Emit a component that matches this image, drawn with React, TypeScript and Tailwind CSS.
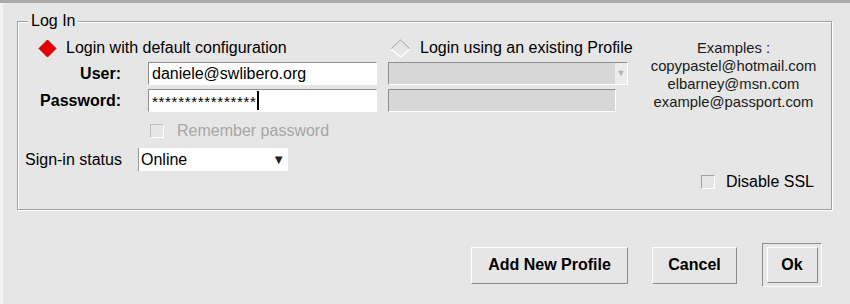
import { FC } from 'react'

const sunken = 'border border-t-[#8e8e8e] border-l-[#8e8e8e] border-b-white border-r-white'
const raised = 'border border-t-white border-l-white border-b-[#8a8a8a] border-r-[#8a8a8a]'

const Diamond: FC<{ on?: boolean }> = ({ on }) =>
  on ? (
    <svg width="19" height="19" viewBox="0 0 19 19" className="shrink-0">
      <polygon points="9.5,1 18,9.5 9.5,18 1,9.5" fill="#e30000" stroke="#c40000" strokeWidth="1" />
    </svg>
  ) : (
    <svg width="21" height="19" viewBox="0 0 21 19" className="shrink-0">
      <polyline points="1,10 10.5,1 20,10" fill="none" stroke="#a0a0a0" strokeWidth="1" />
      <polyline points="1,10 10.5,18 20,10" fill="none" stroke="#ffffff" strokeWidth="1.2" />
    </svg>
  )

const Check: FC<{ disabled?: boolean }> = ({ disabled }) => (
  <span
    className={`inline-block w-[14px] h-[14px] shrink-0 border ${
      disabled
        ? 'border-t-[#bdbdbd] border-l-[#bdbdbd] border-b-white border-r-white'
        : 'border-t-[#a2a2a2] border-l-[#a2a2a2] border-b-white border-r-white'
    }`}
  />
)

const App: FC = () => {
  return (
    <div className="w-[850px] h-[304px] bg-[#e6e6e6] text-[16px] text-black font-['Liberation_Sans',Arial,sans-serif] border-t-[3px] border-[#ababab] overflow-hidden">
      <div className="h-full border-l-[3px] border-l-[#f4f4f4] pt-[18px]">
        {/* Log In group */}
        <div className="relative ml-[14px] w-[815px] h-[189px] border border-[#a0a0a0] shadow-[inset_1px_1px_0_#fff,1px_1px_0_#fff]">
          <span className="absolute -top-[10px] left-[10px] px-[3px] bg-[#e6e6e6] leading-[18px]">Log In</span>

          <div className="flex pt-[16px]">
            {/* left column */}
            <div className="w-[362px]">
              <div className="flex items-center h-[20px] pl-[20px] gap-[9px]">
                <Diamond on />
                <span>Login with default configuration</span>
              </div>
              <div className="flex items-center mt-[4px] h-[23px]">
                <span className="w-[103px] text-right font-bold">User:</span>
                <div className={`ml-[27px] w-[229px] h-[23px] bg-white flex items-center pl-[3px] ${sunken}`}>
                  daniele@swlibero.org
                </div>
              </div>
              <div className="flex items-center mt-[4px] h-[23px]">
                <span className="w-[103px] text-right font-bold">Password:</span>
                <div className={`ml-[27px] w-[229px] h-[23px] bg-white flex items-center pl-[3px] ${sunken}`}>
                  <span className="tracking-[0.7px] text-[15px] leading-none mt-[2px]">****************</span>
                  <span className="inline-block w-[2px] h-[19px] bg-black" />
                </div>
              </div>
              <div className="flex items-center mt-[12px] h-[14px] pl-[132px] gap-[13px] text-[#a6a6a6]">
                <Check disabled />
                <span>Remember password</span>
              </div>
              <div className="flex items-center mt-[10px] h-[23px] pl-[7px]">
                <span className="w-[113px]">Sign-in status</span>
                <div className="w-[150px] h-[23px] bg-white flex items-center justify-between pl-[2px] pr-[3px] border-l border-l-[#9a9a9a]">
                  <span>Online</span>
                  <span className="text-[13px] text-[#222]">▼</span>
                </div>
              </div>
            </div>

            {/* middle column */}
            <div className="w-[256px]">
              <div className="flex items-center h-[20px] pl-[10px] gap-[9px]">
                <Diamond />
                <span>Login using an existing Profile</span>
              </div>
              <div className={`mt-[4px] ml-[8px] w-[240px] h-[23px] bg-[#d7d7d7] flex justify-end ${sunken}`}>
                <div className="w-[12px] h-full bg-[#ececec] flex items-center justify-center text-[9px] text-[#b3b3b3]">▼</div>
              </div>
              <div className={`mt-[4px] ml-[8px] w-[228px] h-[23px] bg-[#d7d7d7] ${sunken}`} />
            </div>

            {/* examples */}
            <div className="flex-1 pt-[1px] text-center text-[14.8px] leading-[18px] text-[#1a1a1a]">
              <div>Examples :</div>
              <div>copypastel@hotmail.com</div>
              <div>elbarney@msn.com</div>
              <div>example@passport.com</div>
            </div>
          </div>

          <div className="flex justify-end items-center gap-[11px] pr-[17px] mt-[4px] h-[14px]">
            <Check />
            <span>Disable SSL</span>
          </div>
        </div>

        {/* buttons */}
        <div className="flex justify-end items-center pr-[28px] mt-[33px] h-[44px] font-bold">
          <button className={`w-[157px] h-[37px] ${raised}`}>Add New Profile</button>
          <button className={`ml-[24px] w-[85px] h-[37px] ${raised}`}>Cancel</button>
          <div className={`ml-[25px] w-[60px] h-[44px] flex items-center justify-center ${sunken}`}>
            <button className={`w-[51px] h-[36px] ${raised}`}>Ok</button>
          </div>
        </div>
      </div>
    </div>
  )
}

export default App
